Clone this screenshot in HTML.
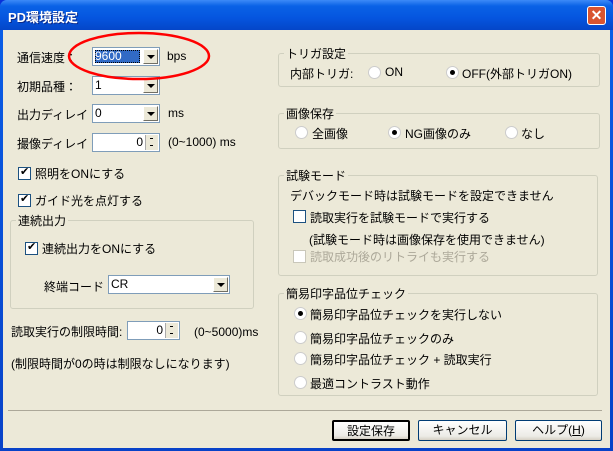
<!DOCTYPE html>
<html><head><meta charset="utf-8"><style>
*{margin:0;padding:0;box-sizing:border-box}
body{width:613px;height:451px;overflow:hidden;background:#0831D9;font-family:"Liberation Sans","Noto Sans CJK JP",sans-serif;font-size:12px;color:#000;position:relative}
.win{position:absolute;left:0;top:0;width:613px;height:451px;background:linear-gradient(#0A5FE8,#0842C8);border-radius:7px 7px 0 0}
.title{position:absolute;left:0;top:0;width:613px;height:30px;background:linear-gradient(#3D8AF7 0,#0A62E6 20%,#0555DF 60%,#0446C8 100%);border-radius:7px 7px 0 0}
.title span{position:absolute;left:8px;top:7px;color:#fff;font-weight:bold;font-size:13px;text-shadow:1px 1px #0a2a8a}
.close{position:absolute;left:587px;top:6px;width:19px;height:19px;background:#D9542F;border:1px solid #fff;border-radius:3px;color:#fff;font-weight:bold;text-align:center;line-height:17px;font-size:14px}
.body{position:absolute;left:3px;top:30px;width:607px;height:418px;background:#ECE9D8}
.a{position:absolute;white-space:nowrap}
.combo{position:absolute;background:#fff;border:1px solid #7F9DB9;height:19px}
.combo .t{position:absolute;left:2px;top:1px}
.combo .b{position:absolute;right:1px;top:1px;width:15px;height:15px;background:#ECE9D8;border:1px solid #fff;border-right-color:#716F64;border-bottom-color:#716F64}
.combo .b:after{content:"";position:absolute;left:3px;top:5px;border:4px solid transparent;border-top:4px solid #000;border-bottom:0}
.spin{position:absolute;background:#fff;border:1px solid #7F9DB9;height:19px;text-align:right;padding-right:16px;line-height:17px}
.spin .b{position:absolute;right:1px;top:1px;width:13px;height:15px;background:#ECE9D8;border-left:1px solid #aaa}
.spin .b:before{content:"";position:absolute;left:4px;top:3px;width:3px;height:1px;background:#000}
.spin .b:after{content:"";position:absolute;left:4px;top:10px;width:3px;height:1px;background:#000}
.grp{position:absolute;border:1px solid #D0D0BF;border-radius:3px}
.grp>.l{position:absolute;left:5px;top:-9px;background:#ECE9D8;padding:0 2px}
.cb{position:absolute;width:13px;height:13px;background:#fff;border:1px solid #1C5180}
.cb.on:after{content:"✔";position:absolute;left:1px;top:-3px;font-size:11px}
.cb.dis{border-color:#C9C7BA}
.rd{position:absolute;width:13px;height:13px;border-radius:50%;background:#fff;border:1px solid #ccc}
.rd.on:after{content:"";position:absolute;left:3px;top:3px;width:5px;height:5px;border-radius:50%;background:#000}
.btn{position:absolute;height:21px;border:1px solid #003C74;border-radius:2px;background:linear-gradient(#fff,#ECEBE6 80%,#D6D0C5);text-align:center;line-height:19px}
</style></head><body>
<div class="win"></div>
<div class="title"><span>PD環境設定</span></div>
<div class="close">✕</div>
<div class="body"></div>

<div class="a" style="left:17px;top:49px">通信速度：</div>
<div class="combo" style="left:92px;top:47px;width:68px"><div style="position:absolute;left:2px;top:2px;width:45px;height:13px;background:#316AC5;border:1px dotted #000"></div><div class="t" style="color:#fff">9600</div><div class="b"></div></div>
<div class="a" style="left:167px;top:49px">bps</div>
<div class="a" style="left:17px;top:78px">初期品種：</div>
<div class="combo" style="left:92px;top:76px;width:68px"><div class="t">1</div><div class="b"></div></div>
<div class="a" style="left:17px;top:106px">出力ディレイ：</div>
<div class="combo" style="left:92px;top:104px;width:68px"><div class="t">0</div><div class="b"></div></div>
<div class="a" style="left:168px;top:106px">ms</div>
<div class="a" style="left:17px;top:135px">撮像ディレイ：</div>
<div class="spin" style="left:92px;top:133px;width:68px">0<div class="b"></div></div>
<div class="a" style="left:168px;top:135px">(0~1000) ms</div>

<svg style="position:absolute;left:66px;top:31px" width="146" height="52"><ellipse cx="73" cy="25" rx="70" ry="23" fill="none" stroke="#f00" stroke-width="2.5"/></svg>

<div class="cb on" style="left:18px;top:167px"></div><div class="a" style="left:35px;top:165px">照明をONにする</div>
<div class="cb on" style="left:18px;top:194px"></div><div class="a" style="left:35px;top:192px">ガイド光を点灯する</div>
<div class="grp" style="left:10px;top:220px;width:244px;height:89px"><span class="l">連続出力</span></div>
<div class="cb on" style="left:25px;top:242px"></div><div class="a" style="left:42px;top:240px">連続出力をONにする</div>
<div class="a" style="left:44px;top:278px">終端コード：</div>
<div class="combo" style="left:108px;top:275px;width:122px"><div class="t">CR</div><div class="b"></div></div>
<div class="a" style="left:11px;top:323px">読取実行の制限時間:</div>
<div class="spin" style="left:127px;top:321px;width:53px">0<div class="b"></div></div>
<div class="a" style="left:194px;top:325px">(0~5000)ms</div>
<div class="a" style="left:11px;top:355px">(制限時間が0の時は制限なしになります)</div>

<div class="grp" style="left:278px;top:53px;width:322px;height:34px"><span class="l">トリガ設定</span></div>
<div class="a" style="left:290px;top:65px">内部トリガ:</div>
<div class="rd" style="left:368px;top:66px"></div><div class="a" style="left:385px;top:65px">ON</div>
<div class="rd on" style="left:446px;top:66px"></div><div class="a" style="left:462px;top:65px">OFF(外部トリガON)</div>

<div class="grp" style="left:278px;top:113px;width:322px;height:36px"><span class="l">画像保存</span></div>
<div class="rd" style="left:295px;top:126px"></div><div class="a" style="left:312px;top:125px">全画像</div>
<div class="rd on" style="left:388px;top:126px"></div><div class="a" style="left:405px;top:125px">NG画像のみ</div>
<div class="rd" style="left:505px;top:126px"></div><div class="a" style="left:521px;top:125px">なし</div>

<div class="grp" style="left:278px;top:175px;width:320px;height:101px"><span class="l">試験モード</span></div>
<div class="a" style="left:290px;top:187px">デバックモード時は試験モードを設定できません</div>
<div class="cb" style="left:293px;top:210px;border-color:#1C5180"></div><div class="a" style="left:310px;top:209px">読取実行を試験モードで実行する</div>
<div class="a" style="left:309px;top:231px">(試験モード時は画像保存を使用できません)</div>
<div class="cb dis" style="left:293px;top:250px"></div><div class="a" style="left:310px;top:248px;color:#ACA899">読取成功後のリトライも実行する</div>

<div class="grp" style="left:278px;top:293px;width:320px;height:103px"><span class="l">簡易印字品位チェック</span></div>
<div class="rd on" style="left:294px;top:307px"></div><div class="a" style="left:310px;top:306px">簡易印字品位チェックを実行しない</div>
<div class="rd" style="left:294px;top:331px"></div><div class="a" style="left:310px;top:330px">簡易印字品位チェックのみ</div>
<div class="rd" style="left:294px;top:352px"></div><div class="a" style="left:310px;top:351px">簡易印字品位チェック + 読取実行</div>
<div class="rd" style="left:294px;top:376px"></div><div class="a" style="left:310px;top:375px">最適コントラスト動作</div>

<div style="position:absolute;left:8px;top:410px;width:594px;height:1px;background:#ACA899"></div>
<div class="btn" style="left:332px;top:420px;width:78px;border:2px solid #000">設定保存</div>
<div class="btn" style="left:418px;top:420px;width:89px">キャンセル</div>
<div class="btn" style="left:515px;top:420px;width:87px">ヘルプ(<u>H</u>)</div>
</body></html>
